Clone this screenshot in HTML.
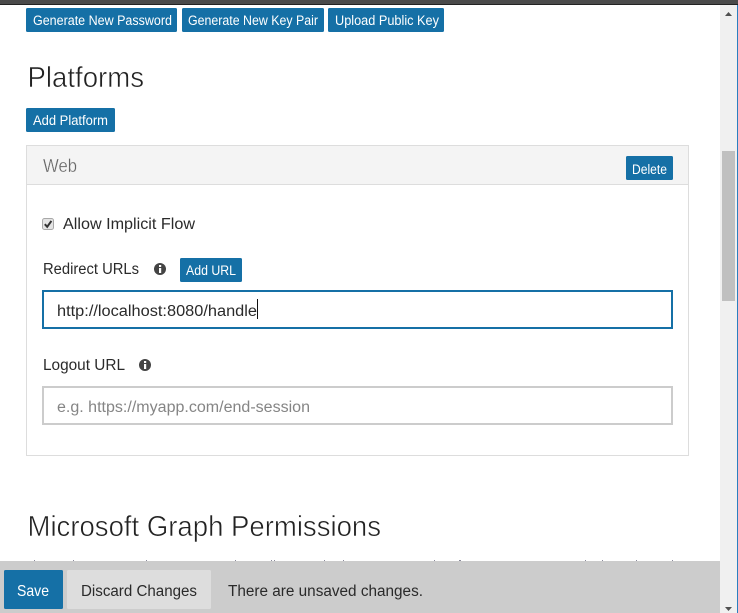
<!DOCTYPE html>
<html lang="en">
<head>
<meta charset="utf-8">
<title>Platforms</title>
<style>
html,body{margin:0;padding:0;width:738px;height:613px;overflow:hidden;background:#fff}
svg{display:block}
text{font-family:"Liberation Sans",sans-serif}
.b{fill:#fff;font-size:13.5px}
.t{fill:#2a2a2a;font-size:15.5px}
.h{fill:#222;font-size:29px;stroke:#fff;stroke-width:.55px;paint-order:normal}
</style>
</head>
<body>
<svg width="738" height="613" viewBox="0 0 738 613" xmlns="http://www.w3.org/2000/svg">
<rect width="738" height="613" fill="#fff"/>
<!-- page top edge -->
<rect width="738" height="4" fill="#4a4a4a"/>
<rect y="4" width="738" height="1" fill="#222"/>
<!-- top buttons -->
<rect x="26" y="8" width="151" height="24" rx="1.5" fill="#1570a6"/>
<rect x="182" y="8" width="142" height="24" rx="1.5" fill="#1570a6"/>
<rect x="328" y="8" width="116" height="24" rx="1.5" fill="#1570a6"/>
<text class="b" x="33" y="25" textLength="139" lengthAdjust="spacingAndGlyphs">Generate New Password</text>
<text class="b" x="188" y="25" textLength="130" lengthAdjust="spacingAndGlyphs">Generate New Key Pair</text>
<text class="b" x="335" y="25" textLength="104" lengthAdjust="spacingAndGlyphs">Upload Public Key</text>
<!-- Platforms -->
<text class="h" x="27.5" y="87" textLength="116.5" lengthAdjust="spacingAndGlyphs">Platforms</text>
<rect x="26" y="108" width="89" height="24" rx="1.5" fill="#1570a6"/>
<text class="b" x="33" y="125" textLength="75" lengthAdjust="spacingAndGlyphs">Add Platform</text>
<!-- card -->
<rect x="26.5" y="145.5" width="662" height="310" fill="#fff" stroke="#ddd"/>
<rect x="27" y="146" width="661" height="38" fill="#f4f4f4"/>
<rect x="27" y="184" width="661" height="1" fill="#ddd"/>
<text x="43" y="172" font-size="18" fill="#666" stroke="#f4f4f4" stroke-width=".3" textLength="34" lengthAdjust="spacingAndGlyphs">Web</text>
<rect x="626" y="156" width="47" height="24" rx="1.5" fill="#1570a6"/>
<text class="b" x="632" y="174" textLength="35" lengthAdjust="spacingAndGlyphs">Delete</text>
<!-- checkbox -->
<rect x="42.5" y="218.5" width="11" height="11" rx="2" fill="#e4e4e4" stroke="#a8a8a8"/>
<path d="M44.8 224.2 L47.2 226.8 L51.4 220.9" fill="none" stroke="#333" stroke-width="2"/>
<text class="t" x="63" y="229" textLength="132" lengthAdjust="spacingAndGlyphs">Allow Implicit Flow</text>
<!-- redirect -->
<text class="t" x="43" y="274" textLength="96" lengthAdjust="spacingAndGlyphs">Redirect URLs</text>
<circle cx="160" cy="269" r="6" fill="#444"/>
<rect x="159" y="268" width="2.2" height="5" fill="#fff"/>
<rect x="159" y="265" width="2.2" height="2" fill="#fff"/>
<rect x="180" y="258" width="62" height="24" rx="1.5" fill="#1570a6"/>
<text class="b" x="186" y="275" textLength="50" lengthAdjust="spacingAndGlyphs">Add URL</text>
<rect x="43" y="291" width="629" height="37" fill="#fff" stroke="#1570a6" stroke-width="2"/>
<text class="t" x="57" y="316" textLength="200" lengthAdjust="spacingAndGlyphs">http://localhost:8080/handle</text>
<rect x="257" y="299" width="1" height="20" fill="#111"/>
<!-- logout -->
<text class="t" x="43" y="370" textLength="82" lengthAdjust="spacingAndGlyphs">Logout URL</text>
<circle cx="145" cy="365" r="6" fill="#444"/>
<rect x="144" y="364" width="2.2" height="5" fill="#fff"/>
<rect x="144" y="361" width="2.2" height="2" fill="#fff"/>
<rect x="43" y="387" width="629" height="37" fill="#fff" stroke="#ccc" stroke-width="2"/>
<text x="57" y="412" font-size="15.5" fill="#858585" textLength="253" lengthAdjust="spacingAndGlyphs">e.g. https://myapp.com/end-session</text>
<!-- graph permissions -->
<text class="h" x="27.5" y="536" textLength="353.5" lengthAdjust="spacingAndGlyphs">Microsoft Graph Permissions</text>
<!-- clipped ascenders of the next line -->
<g fill="#8a8a9a">
<rect x="34" y="560" width="1" height="1"/><rect x="73" y="560" width="1" height="1"/><rect x="146" y="560" width="1" height="1"/><rect x="235" y="560" width="1" height="1"/><rect x="271" y="560" width="1" height="1"/><rect x="274" y="560" width="1" height="1"/><rect x="324" y="560" width="1" height="1"/><rect x="343" y="560" width="1" height="1"/><rect x="434" y="560" width="1" height="1"/><rect x="459" y="560" width="2" height="1"/><rect x="585" y="560" width="1" height="1"/><rect x="602" y="560" width="1" height="1"/><rect x="636" y="560" width="1" height="1"/><rect x="672" y="560" width="1" height="1"/>
</g>
<!-- scrollbar -->
<rect x="720" y="5" width="17" height="608" fill="#f0f0f0"/>
<rect x="722" y="151" width="13" height="150" fill="#c0c0c0"/>
<path d="M725 16 L732 16 L728.5 12 Z" fill="#505050"/>
<path d="M725 607 L732 607 L728.5 611 Z" fill="#505050"/>
<rect x="737" y="5" width="1" height="608" fill="#2b7fc0"/>
<!-- save bar -->
<rect x="0" y="561" width="720" height="52" fill="#ccc"/>
<rect x="4" y="570" width="59" height="39" rx="1.5" fill="#1570a6"/>
<text x="17" y="596" font-size="16" fill="#fff" textLength="32" lengthAdjust="spacingAndGlyphs">Save</text>
<rect x="67" y="570" width="144" height="39" rx="1.5" fill="#ddd"/>
<text class="t" x="81" y="596" textLength="116" lengthAdjust="spacingAndGlyphs">Discard Changes</text>
<text class="t" x="228" y="596" textLength="195" lengthAdjust="spacingAndGlyphs">There are unsaved changes.</text>
</svg>
</body>
</html>
